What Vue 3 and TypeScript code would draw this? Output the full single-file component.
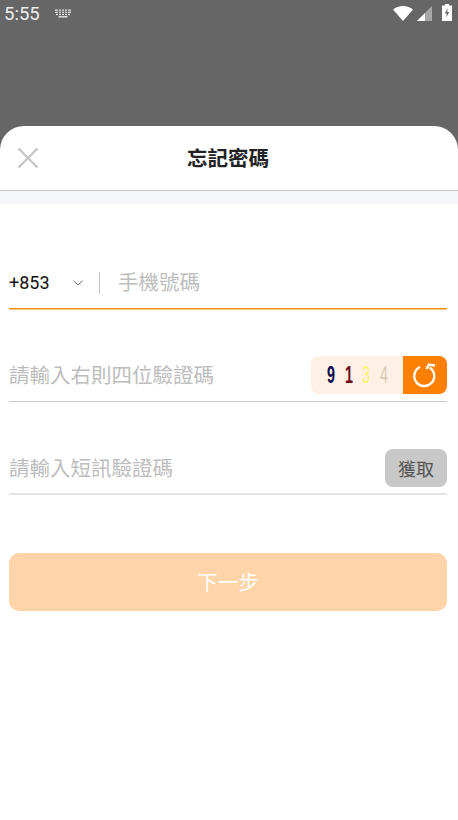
<script setup lang="ts">
const digits = [
  { t: '9', c: '#0a0a50', w: 700 },
  { t: '1', c: '#6a0a1a', w: 700 },
  { t: '3', c: '#f7f76e', w: 400 },
  { t: '4', c: '#d8cbb8', w: 400 },
]
</script>

<template>
  <div class="page">
    <div class="status">
      <span class="time">5:55</span>
      <svg class="kbd" width="16" height="9" viewBox="0 0 16 9">
        <g fill="#e8e8e8">
          <rect x="0" y="0.5" width="16" height="1.2" />
          <rect x="0" y="2.7" width="16" height="1.2" />
          <rect x="1" y="4.9" width="14" height="1.2" />
          <rect x="3.5" y="7.1" width="9" height="1.4" />
        </g>
        <g fill="#666">
          <rect x="3" y="0" width="1" height="6.5" />
          <rect x="6" y="0" width="1" height="6.5" />
          <rect x="9" y="0" width="1" height="6.5" />
          <rect x="12" y="0" width="1" height="6.5" />
        </g>
      </svg>
      <span class="spacer"></span>
      <svg width="20" height="15" viewBox="0 0 20 15" class="wifi"><path d="M0 3.4C2.700 1.300 6.200 0 10 0s7.300 1.300 10 3.400L10 15z" fill="#fff" /></svg>
      <svg width="15" height="15" viewBox="0 0 15 15" class="signal">
        <path d="M0 15L15 0v15z" fill="#a8a8a8" />
        <path d="M0 15L8 7v8z" fill="#fff" />
      </svg>
      <svg width="10" height="17" viewBox="0 0 10 17" class="batt">
        <path d="M3 0h4v1.500h3V17H0V1.500h3z" fill="#fff" />
        <path d="M5.800 4L2.800 9.600h2l-.6 4L7.200 8H5.200z" fill="#666" />
      </svg>
    </div>

    <div class="sheet">
      <header class="head">
        <svg class="close" width="22" height="22" viewBox="0 0 22 22">
          <path d="M1.500 1.500L20.500 20.500M20.500 1.500L1.500 20.500" stroke="#c6c6c6" stroke-width="2.400" fill="none" />
        </svg>
        <h1 class="title">忘記密碼</h1>
      </header>
      <div class="strip"></div>

      <form class="form" @submit.prevent>
        <div class="row row-active">
          <span class="code">+853</span>
          <svg class="chev" width="10" height="6" viewBox="0 0 10 6">
            <path d="M.5.8L5 5 9.500.8" stroke="#666" stroke-width="1" fill="none" />
          </svg>
          <span class="divider"></span>
          <span class="ph">手機號碼</span>
        </div>

        <div class="row row-captcha">
          <span class="ph grow">請輸入右則四位驗證碼</span>
          <div class="captcha">
            <div class="digits">
              <span
                v-for="d in digits"
                :key="d.t"
                class="digit"
                :style="{ color: d.c, fontWeight: d.w }"
              >{{ d.t }}</span>
            </div>
            <div class="refresh">
              <svg width="28" height="28" viewBox="0 0 28 28">
                <path d="M9 6A10 10 0 1 0 18.500 6.500" stroke="#fff" stroke-width="2.400" fill="none" />
                <path d="M15.500 8L18 3.500 24 4.500" stroke="#fff" stroke-width="2.400" fill="none" />
              </svg>
            </div>
          </div>
        </div>

        <div class="row row-sms">
          <span class="ph grow">請輸入短訊驗證碼</span>
          <button type="button" class="get">獲取</button>
        </div>

        <button type="button" class="next">下一步</button>
      </form>
    </div>
  </div>
</template>

<style scoped>
.page {
  width: 458px;
  height: 820px;
  background: #666;
  display: flex;
  flex-direction: column;
  overflow: hidden;
  font-family: Roboto, "Noto Sans CJK TC", sans-serif;
}
.status {
  height: 126px;
  flex: none;
  display: flex;
  align-items: flex-start;
  padding: 4px 6px 0 4px;
  box-sizing: border-box;
  color: #eee;
}
.time {
  font-size: 18.5px;
  line-height: 20px;
  font-weight: 400;
}
.kbd {
  margin: 5px 0 0 15px;
}
.spacer {
  flex: 1;
}
.wifi {
  margin-top: 2px;
}
.signal {
  margin: 2px 0 0 4px;
}
.batt {
  margin: 0 0 0 10px;
}
.sheet {
  flex: 1;
  background: #fff;
  border-radius: 24px 24px 0 0;
}
.head {
  height: 65px;
  box-sizing: border-box;
  border-bottom: 1px solid #c8c8c8;
  display: flex;
  align-items: center;
  justify-content: center;
  padding: 0 2px 2px 0;
  position: relative;
}
.close {
  position: absolute;
  left: 17px;
  top: 21px;
}
.title {
  margin: 0;
  font-size: 20.5px;
  font-weight: 700;
  color: #222;
}
.strip {
  height: 13px;
  background: #f5f6f9;
}
.form {
  padding: 12px 11px 0 9px;
  display: flex;
  flex-direction: column;
}
.row {
  height: 93px;
  box-sizing: border-box;
  border-bottom: 1px solid #c9c9c9;
  display: flex;
  align-items: flex-end;
}
.row-active {
  border-bottom-color: #f59310;
  box-shadow: 0 1px 0 #ffc878;
  padding-bottom: 13px;
}
.row-captcha {
  padding-bottom: 7px;
}
.row-sms {
  border-bottom: 2px solid #e4e4e4;
  padding-bottom: 6px;
}
.code {
  font-size: 18px;
  line-height: 24px;
  color: #111;
  width: 64px;
}
.chev {
  margin-bottom: 9px;
}
.divider {
  width: 1px;
  height: 22px;
  background: #c4c4c4;
  margin: 0 18px 1px 16px;
}
.ph {
  font-size: 20.5px;
  line-height: 24px;
  color: #bdbdbd;
}
.grow {
  flex: 1;
  margin-bottom: 6px;
}
.captcha {
  width: 136px;
  height: 38px;
  border-radius: 8px;
  overflow: hidden;
  display: flex;
  background: #fef0e5;
}
.digits {
  flex: 1;
  display: flex;
  align-items: center;
  padding-left: 14px;
  gap: 7.500px;
}
.digit {
  width: 10px;
  text-align: center;
  font-family: "Liberation Sans", sans-serif;
  font-size: 23px;
  display: inline-block;
  transform: scaleX(0.62);
}
.refresh {
  width: 44px;
  background: #ff8000;
  display: flex;
  align-items: center;
  justify-content: center;
}
.get {
  width: 62px;
  height: 38px;
  border: 0;
  border-radius: 8px;
  background: #c8c8c8;
  color: #555;
  font-family: inherit;
  font-size: 18px;
  padding: 0;
}
.next {
  margin-top: 58px;
  height: 58px;
  border: 0;
  border-radius: 10px;
  background: #fed4a8;
  color: #fff;
  font-family: inherit;
  font-size: 20.5px;
  padding: 0 0 2px;
}
</style>
